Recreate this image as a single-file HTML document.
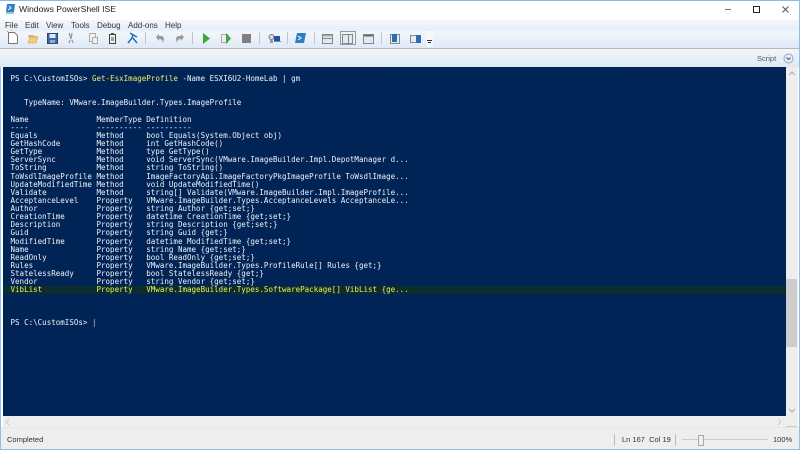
<!DOCTYPE html>
<html><head><meta charset="utf-8"><style>
html,body{margin:0;padding:0;width:800px;height:450px;overflow:hidden;background:#fff}
body{position:relative;font-family:"Liberation Sans",sans-serif;color:#222}
.a{position:absolute}
#con{left:3px;top:67px;width:783px;height:349px;background:#012456}
pre{position:absolute;margin:0;font:7.5px/8.12px "DejaVu Sans Mono",monospace;letter-spacing:.01px;color:#eef2f6;white-space:pre}
.m{font-size:8px;color:#333;top:21px}
</style></head><body>
<div class="a" style="left:0;top:0;width:800px;height:1px;background:#84bdf0"></div>
<div class="a" style="left:0;top:20px;width:800px;height:28px;background:linear-gradient(#f3f7fc 0,#e6eef8 35%,#f2f6fb 45%,#dfe9f5 100%)"></div>
<div class="a" style="left:0;top:48px;width:800px;height:1px;background:#bdb8ac"></div>
<div class="a" style="left:0;top:49px;width:800px;height:18px;background:linear-gradient(#f2f6fb,#dfe9f5)"></div>
<svg class="a" style="left:5px;top:3px" width="12" height="12" viewBox="0 0 12 12"><path d="M2 1h8l-1 8H1z" fill="#2f7ec0"/><path d="M4 3l2 2-3 2" stroke="#fff" fill="none"/><rect x="1" y="9" width="8" height="2" fill="#9cc"/></svg>
<div class="a" style="left:19px;top:4px;font-size:8.6px;color:#222">Windows PowerShell ISE</div>
<span class="a m" style="left:5px">File</span><span class="a m" style="left:25px">Edit</span><span class="a m" style="left:46px">View</span><span class="a m" style="left:71px">Tools</span><span class="a m" style="left:97px">Debug</span><span class="a m" style="left:128px">Add-ons</span><span class="a m" style="left:165px">Help</span>
<svg class="a" style="left:0;top:29px" width="800" height="18" viewBox="0 0 800 18">
<path d="M8.500 3.500h6l3 3v8h-9z" fill="#fff" stroke="#777"/><path d="M8 3l-1-1M12 2V1" stroke="#e8a838"/>
<path d="M28 6h5l1 1h3v2h-8z" fill="#d9b468"/><path d="M28 14l2-6h8l-2 6z" fill="#f0cd78" stroke="#c69c4c" stroke-width=".5"/>
<rect x="47.500" y="4.500" width="10" height="10" fill="#3d68a8" stroke="#27477c"/><rect x="49.500" y="5" width="6" height="4" fill="#dde8f5"/><rect x="50" y="11" width="5" height="3" fill="#9ab"/>
<path d="M72 4l-1 6M69 4l2 6M70 11l-1 3M72 11l1 3" stroke="#9a9a9a" stroke-width="1.300" fill="none"/>
<rect x="89.500" y="4.500" width="6" height="8" fill="#f2f2f2" stroke="#aaa"/><rect x="92.500" y="8.500" width="5" height="6" fill="#f2f2f2" stroke="#aaa"/>
<rect x="109.500" y="5.500" width="6" height="9" fill="#eee" stroke="#444"/><rect x="111" y="4" width="3" height="2" fill="#444"/><path d="M111 9h3M111 11h3" stroke="#555"/>
<path d="M128 14l4-5 1-4M130 4l5 3 2 1M133 9l4 5" stroke="#1b70b8" stroke-width="1.500" fill="none"/>
<path d="M145.500 3v12M192.500 3v12M259.500 3v12M287.500 3v12M314.500 3v12M381.500 3v12" stroke="#bcc4cc"/>
<path d="M156 8l3-3v2h3q2 1 2 3l-1 4-1-3q-1-1-3-1v2z" fill="#9a9a9a"/>
<path d="M184 8l-3-3v2h-3q-2 1-2 3l1 4 1-3q1-1 3-1v2z" fill="#9a9a9a"/>
<path d="M203 4v11l7-5.500z" fill="#3fa83a"/>
<rect x="221.500" y="5.500" width="6" height="8" fill="#eee" stroke="#aaa"/><path d="M226 4v11l5-5.500z" fill="#3fa83a"/>
<rect x="242" y="5" width="9" height="9" fill="#808080"/>
<circle cx="271.500" cy="8" r="2.500" fill="#ddd" stroke="#777"/><rect x="270" y="11" width="3" height="3" fill="#999"/><rect x="274" y="7" width="6" height="5" fill="#1c4fb8"/><rect x="274" y="12" width="7" height="1" fill="#888"/>
<path d="M297 4h9l-2 10h-9z" fill="#2d7fc4"/><path d="M298 7l3 2-3 2" stroke="#fff" fill="none"/>
<rect x="322.500" y="5.500" width="10" height="9" fill="#e6e9ec" stroke="#808890"/><path d="M323 9.500h9" stroke="#808890"/><rect x="323" y="6" width="9" height="1.500" fill="#aab"/>
<rect x="340.500" y="2.500" width="15" height="13" fill="#eef1f5" stroke="#9a9a9a"/><rect x="342.500" y="5.500" width="10" height="9" fill="#e6e9ec" stroke="#808890"/><path d="M348.500 6v8" stroke="#808890"/>
<rect x="363.500" y="5.500" width="10" height="9" fill="#e6e9ec" stroke="#808890"/><rect x="364" y="6" width="9" height="1.500" fill="#667"/>
<rect x="390.500" y="5.500" width="9" height="9" fill="#e8edf3" stroke="#808890"/><rect x="392" y="5" width="5" height="8" fill="#2d6cb0"/>
<rect x="410.500" y="6.500" width="9" height="7" fill="#e8edf3" stroke="#808890"/><rect x="416" y="6" width="5" height="8" fill="#2d6cb0"/>
<rect x="426" y="2" width="7" height="16" fill="#f6f8fb"/><path d="M427 11.500h5M428 13.500h3" stroke="#333"/>
</svg>
<div class="a" style="left:757px;top:54px;font-size:7.5px;color:#4a5a70">Script</div>
<svg class="a" style="left:781px;top:52px" width="14" height="14" viewBox="0 0 14 14"><circle cx="7.500" cy="6.500" r="4.500" fill="#e8eef6" stroke="#9aa8b8"/><path d="M5.500 5.500l2 2 2-2" stroke="#2a6ab0" fill="none" stroke-width="1.200"/></svg>
<svg class="a" style="left:680px;top:0" width="120" height="20" viewBox="0 0 120 20"><path d="M45 9.500h6" stroke="#777"/><rect x="73.500" y="6.500" width="6" height="6" fill="none" stroke="#222" stroke-width="1"/><path d="M102.500 6.500l6 6M108.500 6.500l-6 6" stroke="#555"/></svg>
<div class="a" id="con"></div>
<div class="a" style="left:3px;top:286px;width:783px;height:8px;background:#0d2c2c"></div>
<pre class="a" style="left:10.500px;top:75px">PS C:\CustomISOs&gt; <span style="color:#f0f060">Get-EsxImageProfile</span> -Name ESXI6U2-HomeLab | gm


   TypeName: VMware.ImageBuilder.Types.ImageProfile

Name               MemberType Definition
----               ---------- ----------
Equals             Method     bool Equals(System.Object obj)
GetHashCode        Method     int GetHashCode()
GetType            Method     type GetType()
ServerSync         Method     void ServerSync(VMware.ImageBuilder.Impl.DepotManager d...
ToString           Method     string ToString()
ToWsdlImageProfile Method     ImageFactoryApi.ImageFactoryPkgImageProfile ToWsdlImage...
UpdateModifiedTime Method     void UpdateModifiedTime()
Validate           Method     string[] Validate(VMware.ImageBuilder.Impl.ImageProfile...
AcceptanceLevel    Property   VMware.ImageBuilder.Types.AcceptanceLevels AcceptanceLe...
Author             Property   string Author {get;set;}
CreationTime       Property   datetime CreationTime {get;set;}
Description        Property   string Description {get;set;}
Guid               Property   string Guid {get;}
ModifiedTime       Property   datetime ModifiedTime {get;set;}
Name               Property   string Name {get;set;}
ReadOnly           Property   bool ReadOnly {get;set;}
Rules              Property   VMware.ImageBuilder.Types.ProfileRule[] Rules {get;}
StatelessReady     Property   bool StatelessReady {get;}
Vendor             Property   string Vendor {get;set;}
<span style="color:#e8f060">VibList            Property   VMware.ImageBuilder.Types.SoftwarePackage[] VibList {ge...</span>



PS C:\CustomISOs&gt; <span style="color:#ccc">|</span></pre>
<div class="a" style="left:786px;top:67px;width:12px;height:360px;background:#eee"></div>
<div class="a" style="left:786px;top:279px;width:11px;height:68px;background:#cdcdcd"></div>
<svg class="a" style="left:786px;top:68px" width="12" height="348" viewBox="0 0 12 348"><path d="M3 7l3-3 3 3M3 341l3 3 3-3" stroke="#aaa" fill="none"/></svg>
<div class="a" style="left:3px;top:416px;width:783px;height:11px;background:#eee"></div>
<svg class="a" style="left:5px;top:416px" width="780" height="12" viewBox="0 0 780 12"><path d="M4 3L1 6l3 3M773 3l3 3-3 3" stroke="#ccc" fill="none"/></svg>
<div class="a" style="left:786px;top:426px;width:11px;height:1px;background:#ccc"></div>
<div class="a" style="left:0;top:427px;width:800px;height:1px;background:#f6e4cd"></div>
<div class="a" style="left:0;top:428px;width:800px;height:21px;background:#eee"></div>
<div class="a" style="left:0;top:67px;width:1px;height:382px;background:#8fc0ec"></div>
<div class="a" style="left:799px;top:0;width:1px;height:449px;background:#8fc0ec"></div>
<div class="a" style="left:0;top:449px;width:800px;height:1px;background:#8fc0ec"></div>
<div class="a" style="left:7px;top:435px;font-size:7.5px;color:#333">Completed</div>
<div class="a" style="left:614px;top:434px;width:1px;height:12px;background:#bbb"></div>
<div class="a" style="left:675px;top:434px;width:1px;height:12px;background:#bbb"></div>
<div class="a" style="left:622px;top:435px;font-size:7.5px;color:#333;white-space:pre">Ln 167  Col 19</div>
<div class="a" style="left:682px;top:439px;width:86px;height:1px;background:#ccc"></div>
<div class="a" style="left:698px;top:435px;width:4px;height:9px;background:#eee;border:1px solid #aaa"></div>
<div class="a" style="left:773px;top:435px;font-size:7.5px;color:#333">100%</div>
</body></html>
